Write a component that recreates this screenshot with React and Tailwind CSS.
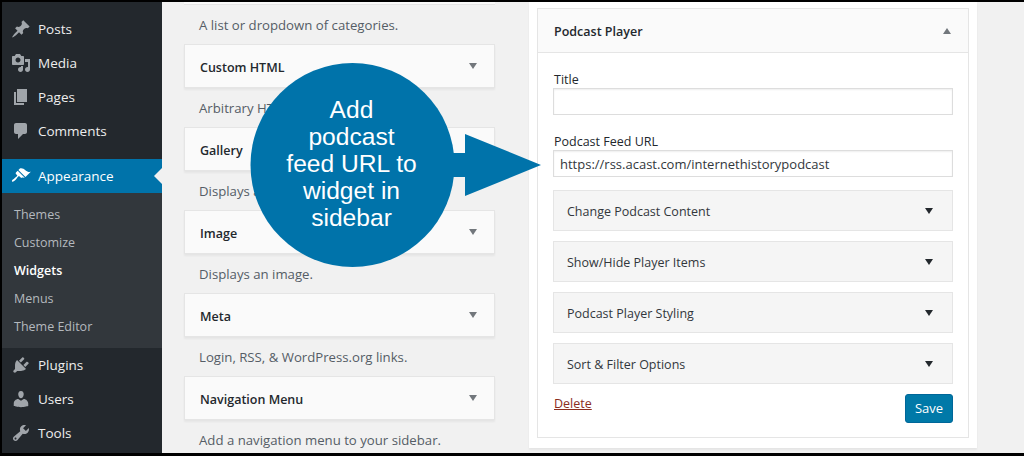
import React from "react";

const icons = {
  post: "M10.44 3.02l1.82-1.82 6.36 6.35-1.83 1.82c-1.05-.68-2.48-.57-3.41.36l-.75.75c-.92.93-1.04 2.35-.35 3.41l-1.83 1.82-2.41-2.41-2.8 2.79c-.42.42-3.38 2.71-3.8 2.29s1.86-3.39 2.28-3.81l2.79-2.79L4.1 9.36l1.83-1.82c1.05.69 2.48.57 3.4-.36l.75-.75c.93-.92 1.05-2.35.36-3.41z",
  media: "M13 11V4c0-.55-.45-1-1-1h-1.67L9 1H5L3.67 3H2c-.55 0-1 .45-1 1v7c0 .55.45 1 1 1h10c.55 0 1-.45 1-1zM7 4.5c1.38 0 2.5 1.12 2.5 2.5S8.38 9.5 7 9.5 4.5 8.38 4.5 7 5.62 4.5 7 4.5zM14 6h5v10.5c0 1.38-1.12 2.5-2.5 2.5S14 17.88 14 16.5s1.12-2.5 2.5-2.5c.17 0 .34.02.5.05V9h-3V6zm-4 8.05V13h2v3.5c0 1.38-1.12 2.5-2.5 2.5S7 17.88 7 16.5 8.12 14 9.5 14c.17 0 .34.02.5.05z",
  page: "M6 15V2h10v13H6zm-1 1h8v2H3V5h2v11z",
  comments: "M5 2h9c1.1 0 2 .9 2 2v7c0 1.1-.9 2-2 2h-2l-5 5v-5H5c-1.1 0-2-.9-2-2V4c0-1.1.9-2 2-2z",
  appearance: "M14.48 11.06L7.41 3.99l1.5-1.5c.5-.56 2.3-.47 3.51.32 1.21.8 1.43 1.28 2.91 2.1 1.18.64 2.45 1.26 4.45.85zm-.71.71L6.7 4.7 4.93 6.47c-.39.39-.39 1.02 0 1.41l1.06 1.06c.39.39.39 1.03 0 1.42-.6.6-1.43 1.11-2.21 1.69-.35.26-.7.53-1.01.84C1.43 13.23.4 14.75 1.1 15.45c.7.7 2.22-.33 3.56-1.68.31-.31.58-.66.85-1.02.57-.78 1.08-1.6 1.69-2.21.39-.39 1.02-.39 1.41 0l1.06 1.06c.39.39 1.02.39 1.41 0z",
  plugins: "M13.11 4.36L9.87 7.6 8 5.73l3.24-3.24c.35-.34 1.05-.2 1.56.32.52.51.66 1.21.31 1.55zm-8 1.77l.91-1.12 9.01 9.01-1.19.84c-.71.71-2.63 1.16-3.82 1.16H6.14L4.9 17.26c-.59.59-1.54.59-2.12 0-.59-.58-.59-1.53 0-2.12l1.24-1.24v-3.88c0-1.13.4-3.19 1.09-3.89zm7.26 3.97l3.24-3.24c.34-.35 1.04-.21 1.55.31.52.51.66 1.21.31 1.55l-3.24 3.25z",
  users: "M10 9.25c-2.27 0-2.73-3.44-2.73-3.44C7 4.02 7.82 2 9.97 2c2.16 0 2.98 2.02 2.71 3.81 0 0-.41 3.44-2.68 3.44zm0 2.57L12.72 10c2.39 0 4.52 2.33 4.52 4.53v2.49s-3.65 1.13-7.24 1.13c-3.65 0-7.24-1.13-7.24-1.13v-2.49c0-2.25 1.94-4.48 4.47-4.48z",
  tools: "M16.68 9.77c-1.34 1.34-3.3 1.67-4.95.99l-5.41 6.52c-.99.99-2.59.99-3.58 0s-.99-2.59 0-3.57l6.52-5.42c-.68-1.65-.35-3.61.99-4.95 1.28-1.28 3.12-1.62 4.72-1.06l-2.89 2.89 2.82 2.82 2.86-2.87c.53 1.58.18 3.39-1.08 4.65zM3.81 16.21c.4.39 1.04.39 1.43 0 .4-.4.4-1.04 0-1.43-.39-.4-1.03-.4-1.43 0-.39.39-.39 1.03 0 1.43z",
};

function NavItem({ icon, label, active }) {
  return (
    <div className={`relative flex h-[34px] items-center pl-[9px] text-[13.5px] ${active ? "bg-[#0073aa] text-white" : "text-[#eeeeee]"}`}>
      <svg viewBox="0 0 20 20" className={`h-5 w-5 ${active ? "fill-white" : "fill-[#a0a5aa]"}`}>
        <path d={icons[icon]} />
      </svg>
      <span className="ml-[7px]">{label}</span>
      {active && <span className="absolute right-0 top-[9px] h-0 w-0 border-y-[8px] border-r-[8px] border-y-transparent border-r-[#f1f1f1]" />}
    </div>
  );
}

function SubItem({ label, current }) {
  return (
    <div className={`flex h-7 items-center pl-3 text-[12.5px] ${current ? "font-semibold text-white" : "text-[#b4b9be]"}`}>{label}</div>
  );
}

function Sidebar() {
  return (
    <aside className="flex w-[160px] shrink-0 flex-col bg-[#23282d] pt-[10px]">
      <NavItem icon="post" label="Posts" />
      <NavItem icon="media" label="Media" />
      <NavItem icon="page" label="Pages" />
      <NavItem icon="comments" label="Comments" />
      <div className="h-[11px]" />
      <NavItem icon="appearance" label="Appearance" active />
      <div className="flex h-[155px] flex-col justify-center bg-[#32373c] pt-[1px]">
        <SubItem label="Themes" />
        <SubItem label="Customize" />
        <SubItem label="Widgets" current />
        <SubItem label="Menus" />
        <SubItem label="Theme Editor" />
      </div>
      <NavItem icon="plugins" label="Plugins" />
      <NavItem icon="users" label="Users" />
      <NavItem icon="tools" label="Tools" />
    </aside>
  );
}

function Desc({ children }) {
  return <p className="flex h-[39px] items-center pl-[15px] pt-[3px] text-[13.2px] text-[#555d66]">{children}</p>;
}

function WidgetCard({ title, desc }) {
  return (
    <div>
      <div className="flex h-[44px] items-center justify-between border border-[#e5e5e5] bg-[#fafafa] pl-[15px] pr-[17px] text-[12.5px] font-semibold text-[#23282d] shadow-[0_2px_2px_rgba(0,0,0,0.05)]">
        <span className="pt-[4px]">{title}</span>
        <span className="h-0 w-0 border-x-[4px] border-t-[6px] border-x-transparent border-t-[#72777c]" />
      </div>
      <Desc>{desc}</Desc>
    </div>
  );
}

function Accordion({ label }) {
  return (
    <div className="flex h-[41px] items-center justify-between border border-[#e5e5e5] bg-[#f5f5f5] pl-[13px] pr-[19px] text-[12.5px] text-[#32373c]">
      <span className="pt-[3px]">{label}</span>
      <span className="h-0 w-0 border-x-[4.5px] border-t-[6px] border-x-transparent border-t-[#23282d]" />
    </div>
  );
}

function Field({ label, value, className }) {
  return (
    <div className={className}>
      <div className="h-[19px] pl-px pt-[2px] text-[12.5px] leading-[18px] text-[#23282d]">{label}</div>
      <div className="flex h-[27px] items-center border border-[#dddddd] bg-white pl-[6px] pt-[2px] text-[13px] text-[#32373c] shadow-[inset_0_1px_2px_rgba(0,0,0,0.07)]">{value}</div>
    </div>
  );
}

function PlayerPanel() {
  return (
    <section className="ml-[34px] h-[446px] w-[448px] bg-white px-2 pt-[6px] shadow-[0_2px_2px_rgba(0,0,0,0.05)]">
      <div className="h-[430px] border border-[#e5e5e5]">
        <div className="flex h-[44px] items-center justify-between border-b border-[#e5e5e5] bg-[#fafafa] pl-4 pr-[17px] text-[12.5px] font-semibold text-[#23282d]">
          <span className="pt-[4px]">Podcast Player</span>
          <span className="h-0 w-0 border-x-[4px] border-b-[6px] border-x-transparent border-b-[#72777c]" />
        </div>
        <div className="px-[15px] pt-[16px]">
          <Field label="Title" value="" />
          <Field label="Podcast Feed URL" value="https://rss.acast.com/internethistorypodcast" className="mt-[16px]" />
          <div className="mt-[13px] flex flex-col gap-[10px]">
            <Accordion label="Change Podcast Content" />
            <Accordion label="Show/Hide Player Items" />
            <Accordion label="Podcast Player Styling" />
            <Accordion label="Sort & Filter Options" />
          </div>
          <div className="mt-[10px] flex items-start justify-between">
            <a className="pl-px pt-px text-[12.5px] leading-[18px] text-[#8b2d1e] underline">Delete</a>
            <button className="h-[29px] w-[48px] rounded-[3px] border border-[#006799] bg-[#0079a8] text-[13px] text-white">Save</button>
          </div>
        </div>
      </div>
    </section>
  );
}

function Callout() {
  return (
    <div className="absolute left-[249px] top-[61px] h-[206px] w-[292px]">
      <svg viewBox="0 0 292 206" className="absolute inset-0 h-full w-full fill-[#0073aa]">
        <circle cx="103.5" cy="104" r="102" />
        <path d="M200 92h16V73l76 31-76 31v-19h-16z" />
      </svg>
      <div className="absolute left-0 top-[35px] w-[205px] text-center text-[24.6px] leading-[27px] text-white [font-family:'Liberation_Sans',Arial,sans-serif]">
        Add<br />podcast<br />feed URL to<br />widget in<br />sidebar
      </div>
    </div>
  );
}

export default function App() {
  return (
    <div className="relative h-[456px] w-[1024px] overflow-hidden bg-black pl-[2px] pt-[2px] pb-[3px] [font-family:'Open_Sans','Noto_Sans',sans-serif]">
      <div className="flex h-[451px] w-[1022px] bg-[#f1f1f1]">
        <Sidebar />
        <main className="ml-[22px] flex">
          <div className="w-[311px]">
            <div className="h-[3px] border-b border-[#e5e5e5] bg-[#fafafa]" />
            <Desc>A list or dropdown of categories.</Desc>
            <WidgetCard title="Custom HTML" desc="Arbitrary HTML code." />
            <WidgetCard title="Gallery" desc="Displays a gallery." />
            <WidgetCard title="Image" desc="Displays an image." />
            <WidgetCard title="Meta" desc="Login, RSS, & WordPress.org links." />
            <WidgetCard title="Navigation Menu" desc="Add a navigation menu to your sidebar." />
          </div>
          <PlayerPanel />
        </main>
      </div>
      <Callout />
    </div>
  );
}
